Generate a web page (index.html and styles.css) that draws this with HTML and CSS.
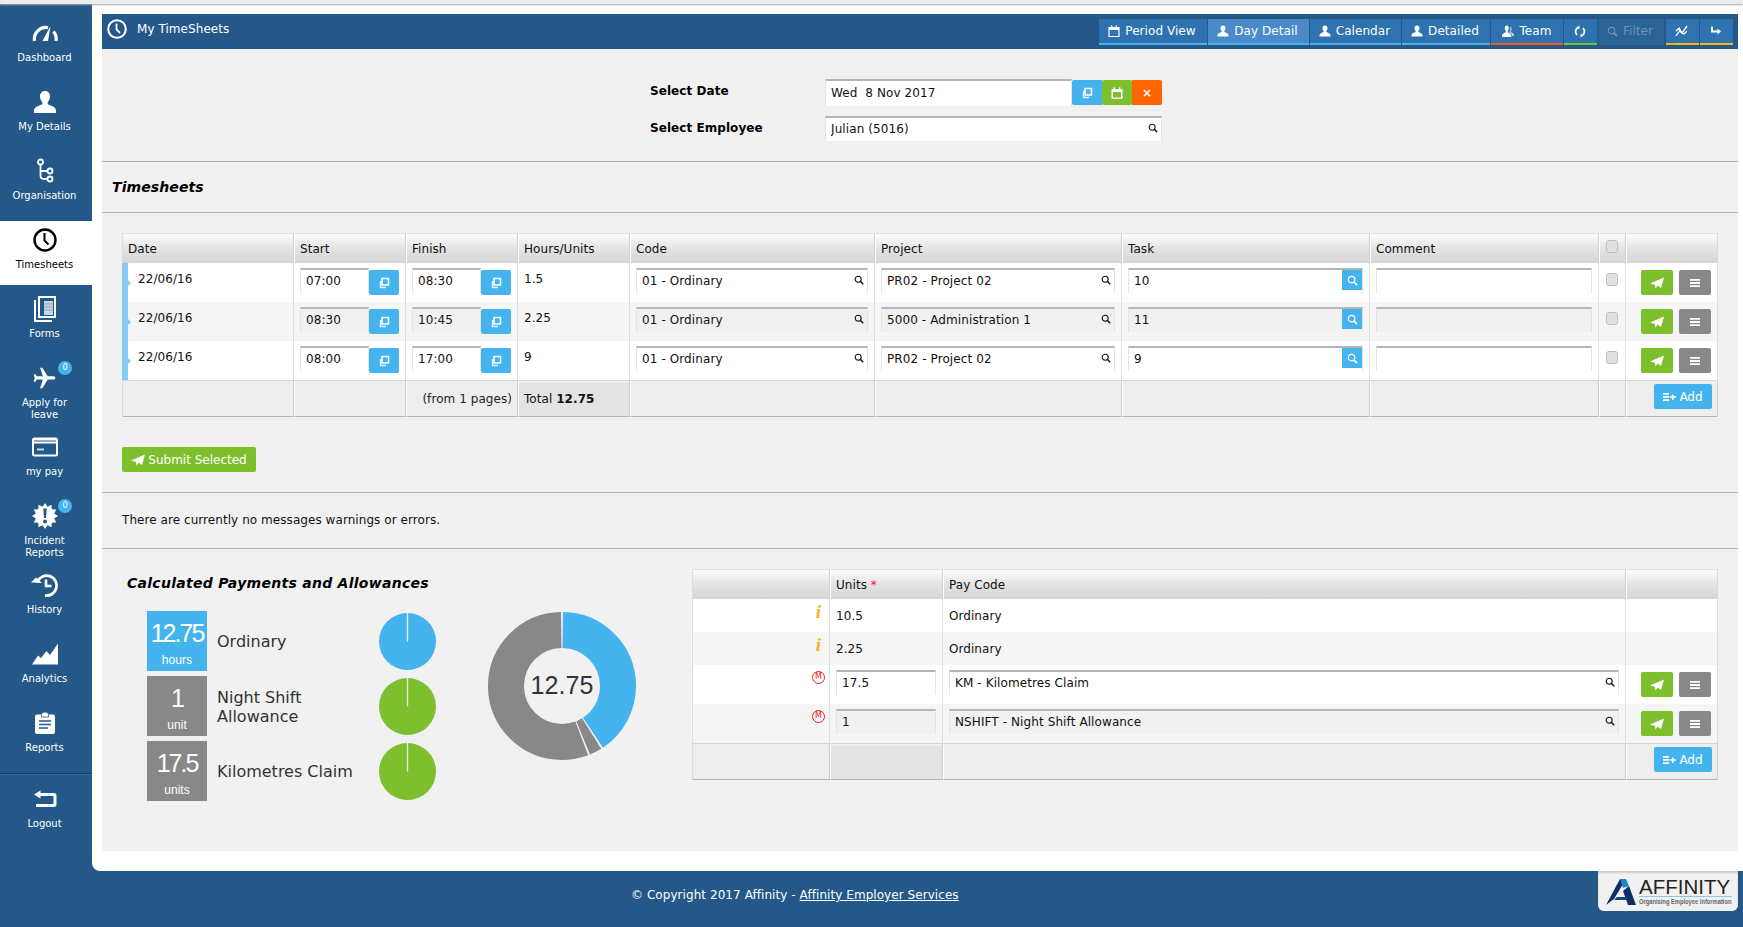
FILE: index.html
```html
<!DOCTYPE html>
<html lang="en">
<head>
<meta charset="utf-8">
<title>My TimeSheets</title>
<link rel="stylesheet" href="styles.css">
</head>
<body>
<svg class="defs" width="0" height="0">
  <symbol id="i-copy" viewBox="0 0 12 12"><path d="M4 1.500h6.500v6.500H4z" fill="none" stroke="currentColor" stroke-width="1.600"/><path d="M2.500 4v6.500H8" fill="none" stroke="currentColor" stroke-width="1.400" opacity=".85"/></symbol>
  <symbol id="i-cal" viewBox="0 0 12 12"><path d="M1 2.500h10v9H1z" fill="none" stroke="currentColor" stroke-width="1.200"/><path d="M1 2h10v3H1zM3 .5h1.400V3H3zM7.600 .5H9V3H7.600z" fill="currentColor"/></symbol>
  <symbol id="i-calf" viewBox="0 0 12 12"><path d="M.5 2h11v9.800H.5zM2 5v5.400h8V5z" fill="currentColor" fill-rule="evenodd"/><path d="M2.600 .3h1.400v3H2.600zM8 .3h1.400v3H8z" fill="currentColor"/></symbol>
  <symbol id="i-user" viewBox="0 0 24 24"><path d="M12 1C8.500 1 7 3.500 7 6.500c0 2.200 1 4.300 2.300 5.500v2.200C6.300 15.500 1 17 1 20.500v2.500h22v-2.500c0-3.500-5.300-5-8.300-6.300V12c1.300-1.200 2.300-3.300 2.300-5.500C17 3.500 15.500 1 12 1z" fill="currentColor"/></symbol>
  <symbol id="i-team" viewBox="0 0 24 24"><path d="M10 1C7 1 6 3.500 6 6c0 2 .8 3.600 2 4.800v2.400C5.500 14.500 1 16 1 19v3h17v-3c0-3-4-4.500-6.500-5.800v-2.400c1.200-1.200 2-2.800 2-4.800 0-2.500-1-5-4.500-5z" fill="currentColor"/><path d="M16 3c2 .5 2.800 2.200 2.800 4 0 1.700-.7 3-1.700 4v2c2 1 5.900 2.300 5.900 5v2.500h-3c0-3-2.500-5-5-6.500v-2c1-1.500 1.500-3 1.500-4.500 0-1.600-.2-3-.5-4.500z" fill="currentColor" opacity=".75"/></symbol>
  <symbol id="i-refresh" viewBox="0 0 12 12"><path d="M4.500 1.800A4.500 4.500 0 0 0 3 9.300M7.500 10.200A4.500 4.500 0 0 0 9 2.700" fill="none" stroke="currentColor" stroke-width="1.800"/><path d="M5.500 0v4L3 1.800zM6.500 12V8L9 10.200z" fill="currentColor"/></symbol>
  <symbol id="i-search" viewBox="0 0 12 12"><circle cx="5" cy="5" r="3.600" fill="none" stroke="currentColor" stroke-width="1.300"/><path d="M7.800 7.800l3.200 3.200" stroke="currentColor" stroke-width="1.800"/></symbol>
  <symbol id="i-chart" viewBox="0 0 14 12"><path d="M1 11l3.500-5 2.500 2 5-7M1 6l3-3 3 5 2 1 3-3" fill="none" stroke="currentColor" stroke-width="1.300"/></symbol>
  <symbol id="i-turn" viewBox="0 0 12 12"><path d="M2 1.500v5h6" fill="none" stroke="currentColor" stroke-width="1.800"/><path d="M7.500 3.500l3.500 3-3.500 3z" fill="currentColor"/></symbol>
  <symbol id="i-send" viewBox="0 0 14 12"><path d="M0 6.500L14 .5 11 11 7.600 8.500 5.500 11.500 5 8z" fill="currentColor"/></symbol>
  <symbol id="i-menu" viewBox="0 0 10 8"><path d="M0 0h10v1.800H0zM0 3.100h10v1.800H0zM0 6.200h10V8H0z" fill="currentColor"/></symbol>
  <symbol id="i-add" viewBox="0 0 13 8"><path d="M0 0h6v1.700H0zM0 3.100h6v1.700H0zM0 6.200h6V8H0zM9 1.500h1.600V3.300H13v1.500h-2.400V7H9V4.800H6.800V3.300H9z" fill="currentColor"/></symbol>
</svg>

<div class="topstrip"></div>

<div class="shell">
  <nav class="sidebar">
    <a class="nav-item"><svg class="nav-icon" width="28" height="20" viewBox="0 0 28 20"><path d="M3.500 18A11.500 11.500 0 0 1 17 4.700" fill="none" stroke="currentColor" stroke-width="3.200"/><path d="M22.500 8.500A11.500 11.500 0 0 1 25 18" fill="none" stroke="currentColor" stroke-width="3.200"/><path d="M11.500 18L19.500 3 17 18z" fill="currentColor"/></svg><span>Dashboard</span></a>
    <a class="nav-item"><svg class="nav-icon" width="24" height="24"><use href="#i-user"/></svg><span>My Details</span></a>
    <a class="nav-item"><svg class="nav-icon" width="18" height="25" viewBox="0 0 18 25"><circle cx="4.500" cy="3.500" r="2.500" fill="none" stroke="currentColor" stroke-width="1.800"/><circle cx="14" cy="12.500" r="2.500" fill="none" stroke="currentColor" stroke-width="1.800"/><circle cx="14" cy="20.500" r="2.500" fill="none" stroke="currentColor" stroke-width="1.800"/><path d="M4.500 6v11c0 2.300 1.300 3.500 3.500 3.500h3.500M4.500 12.500h7" fill="none" stroke="currentColor" stroke-width="1.800"/></svg><span>Organisation</span></a>
    <a class="nav-item is-active"><svg class="nav-icon" width="24" height="24" viewBox="0 0 24 24"><circle cx="12" cy="12" r="10.500" fill="none" stroke="currentColor" stroke-width="2.400"/><path d="M11.500 5v7.500l4 4" fill="none" stroke="currentColor" stroke-width="2"/></svg><span>Timesheets</span></a>
    <a class="nav-item"><svg class="nav-icon" width="22" height="26" viewBox="0 0 22 26"><path d="M4 0h18v22H4z" fill="currentColor"/><path d="M6 2h14v18H6z" fill="#235888"/><path d="M10 5h9v14H10z" fill="#c8d5e2"/><path d="M0 4h2v20h16v2H0z" fill="currentColor"/><path d="M10 8h9M10 11h9M10 14h9" stroke="#8fa6bd" stroke-width="1"/></svg><span>Forms</span></a>
    <a class="nav-item"><svg class="nav-icon" width="26" height="26" viewBox="0 0 24 24"><path transform="rotate(90 11.500 12)" d="M21 16v-2l-8-5V3.500c0-.83-.67-1.500-1.500-1.500S10 2.670 10 3.500V9l-8 5v2l8-2.500V19l-2 1.500V22l3.500-1 3.500 1v-1.500L13 19v-5.500l8 2.500z" fill="currentColor"/></svg><span class="narrow">Apply for leave</span><b class="badge">0</b></a>
    <a class="nav-item"><svg class="nav-icon" width="26" height="19" viewBox="0 0 26 19"><rect width="26" height="19" rx="2.500" fill="currentColor"/><path d="M2 6h22v11H2z" fill="#235888"/><path d="M2 3h22v1H2z" fill="#235888"/><path d="M5 11h7v2H5z" fill="#c8d5e2"/></svg><span>my pay</span></a>
    <a class="nav-item"><svg class="nav-icon" width="26" height="26" viewBox="0 0 26 26"><polygon fill="currentColor" points="26,13 22.180,15.460 24.260,19.500 19.720,19.720 19.500,24.260 15.460,22.180 13,26 10.540,22.180 6.500,24.260 6.280,19.720 1.740,19.500 3.820,15.460 0,13 3.820,10.540 1.740,6.500 6.280,6.280 6.500,1.740 10.540,3.820 13,0 15.460,3.820 19.500,1.740 19.720,6.280 24.260,6.500 22.180,10.540"/><path d="M11.300 5.500h3.400L14 15h-2z" fill="#235888"/><circle cx="13" cy="18.500" r="2" fill="#235888"/></svg><span class="narrow">Incident Reports</span><b class="badge">0</b></a>
    <a class="nav-item"><svg class="nav-icon" width="27" height="24" viewBox="0 0 27 24"><path d="M6.500 8.500A10 10 0 1 1 14 22.500" fill="none" stroke="currentColor" stroke-width="2.800"/><path d="M0 9.500l5-5 6 5.500z" fill="currentColor"/><path d="M15 6.500v6.500h5.500" fill="none" stroke="currentColor" stroke-width="2.600"/></svg><span>History</span></a>
    <a class="nav-item"><svg class="nav-icon" width="26" height="21" viewBox="0 0 26 21"><path d="M0 21l6-9 3 2.500 5.500-7 3.500 4L26 0v21z" fill="currentColor"/></svg><span>Analytics</span></a>
    <a class="nav-item"><svg class="nav-icon" width="20" height="22" viewBox="0 0 20 22"><rect y="2.500" width="20" height="19.500" rx="2" fill="currentColor"/><path d="M6.500 2.500a3.500 2.500 0 0 1 7 0V5h-7z" fill="currentColor" stroke="#235888" stroke-width=".8"/><path d="M4 9h12M4 12.500h12M4 16h9" stroke="#235888" stroke-width="1.500"/></svg><span>Reports</span></a>
    <div class="nav-rule"></div>
    <a class="nav-item"><svg class="nav-icon" width="22" height="17" viewBox="0 0 22 17"><path d="M6 4h13.500a1.500 1.500 0 0 1 1.500 1.500v8a1.500 1.500 0 0 1-1.500 1.500H2" fill="none" stroke="currentColor" stroke-width="3"/><path d="M0 4l6.500-4v8z" fill="currentColor"/></svg><span>Logout</span></a>
  </nav>

  <main class="main">
    <div class="panel">
      <header class="titlebar">
        <svg class="title-clock" width="20" height="20" viewBox="0 0 20 20"><circle cx="10" cy="10" r="8.800" fill="none" stroke="currentColor" stroke-width="2"/><path d="M9.500 4.500v6l3.500 3.500" fill="none" stroke="currentColor" stroke-width="1.800"/></svg>
        <h1 class="title-text">My TimeSheets</h1>
        <div class="tabs">
          <a class="tab"><svg width="12" height="12"><use href="#i-cal"/></svg>Period View</a>
          <a class="tab is-current"><svg width="12" height="12"><use href="#i-user"/></svg>Day Detail</a>
          <a class="tab"><svg width="12" height="12"><use href="#i-user"/></svg>Calendar</a>
          <a class="tab"><svg width="12" height="12"><use href="#i-user"/></svg>Detailed</a>
          <a class="tab tab-orange"><svg width="14" height="13"><use href="#i-team"/></svg>Team</a>
          <a class="tab tab-green"><svg width="12" height="13"><use href="#i-refresh"/></svg></a>
          <a class="tab tab-off"><svg width="11" height="11"><use href="#i-search"/></svg>Filter</a>
          <a class="tab tab-yellow"><svg width="14" height="12"><use href="#i-chart"/></svg></a>
          <a class="tab tab-yellow"><svg width="12" height="12"><use href="#i-turn"/></svg></a>
        </div>
      </header>

      <section class="selectors">
        <div class="sel-row">
          <label class="sel-label">Select Date</label>
          <input class="field sel-date" value="Wed  8 Nov 2017">
          <div class="date-btns">
            <button class="ibtn c-blue"><svg width="12" height="12"><use href="#i-copy"/></svg></button>
            <button class="ibtn c-green"><svg width="12" height="12"><use href="#i-calf"/></svg></button>
            <button class="ibtn c-orange"><span class="x">×</span></button>
          </div>
        </div>
        <div class="sel-row sel-row-2">
          <label class="sel-label">Select Employee</label>
          <div class="lookup sel-emp"><input class="field" value="Julian (5016)"><svg class="lookup-icon" width="10" height="10"><use href="#i-search"/></svg></div>
        </div>
      </section>

      <h2 class="sec-title">Timesheets</h2>

      <section class="sec-table">
        <table class="grid grid-time">
          <colgroup><col class="w172"><col class="w112"><col class="w112"><col class="w112"><col class="w245"><col class="w247"><col class="w248"><col class="w229"><col class="w27"><col class="w92"></colgroup>
          <thead><tr><th>Date</th><th>Start</th><th>Finish</th><th>Hours/Units</th><th>Code</th><th>Project</th><th>Task</th><th>Comment</th><th class="th-check"><i class="check"></i></th><th></th></tr></thead>
          <tbody>
            <tr>
              <td class="date-cell">22/06/16</td>
              <td><div class="timebox"><input class="field" value="07:00"><button class="ibtn c-blue"><svg width="12" height="12"><use href="#i-copy"/></svg></button></div></td>
              <td><div class="timebox"><input class="field" value="08:30"><button class="ibtn c-blue"><svg width="12" height="12"><use href="#i-copy"/></svg></button></div></td>
              <td class="txt">1.5</td>
              <td><div class="lookup"><input class="field" value="01 - Ordinary"><svg class="lookup-icon" width="10" height="10"><use href="#i-search"/></svg></div></td>
              <td><div class="lookup"><input class="field" value="PR02 - Project 02"><svg class="lookup-icon" width="10" height="10"><use href="#i-search"/></svg></div></td>
              <td><div class="lookup"><input class="field" value="10"><button class="lookup-btn"><svg width="11" height="11"><use href="#i-search"/></svg></button></div></td>
              <td><div class="lookup lookup-c"><input class="field"></div></td>
              <td class="td-check"><i class="check"></i></td>
              <td><div class="acts"><button class="abtn c-green"><svg width="14" height="12"><use href="#i-send"/></svg></button><button class="abtn c-grey"><svg width="10" height="8"><use href="#i-menu"/></svg></button></div></td>
            </tr>
            <tr class="alt">
              <td class="date-cell">22/06/16</td>
              <td><div class="timebox"><input class="field" value="08:30"><button class="ibtn c-blue"><svg width="12" height="12"><use href="#i-copy"/></svg></button></div></td>
              <td><div class="timebox"><input class="field" value="10:45"><button class="ibtn c-blue"><svg width="12" height="12"><use href="#i-copy"/></svg></button></div></td>
              <td class="txt">2.25</td>
              <td><div class="lookup"><input class="field" value="01 - Ordinary"><svg class="lookup-icon" width="10" height="10"><use href="#i-search"/></svg></div></td>
              <td><div class="lookup"><input class="field" value="5000 - Administration 1"><svg class="lookup-icon" width="10" height="10"><use href="#i-search"/></svg></div></td>
              <td><div class="lookup"><input class="field" value="11"><button class="lookup-btn"><svg width="11" height="11"><use href="#i-search"/></svg></button></div></td>
              <td><div class="lookup lookup-c"><input class="field"></div></td>
              <td class="td-check"><i class="check"></i></td>
              <td><div class="acts"><button class="abtn c-green"><svg width="14" height="12"><use href="#i-send"/></svg></button><button class="abtn c-grey"><svg width="10" height="8"><use href="#i-menu"/></svg></button></div></td>
            </tr>
            <tr>
              <td class="date-cell">22/06/16</td>
              <td><div class="timebox"><input class="field" value="08:00"><button class="ibtn c-blue"><svg width="12" height="12"><use href="#i-copy"/></svg></button></div></td>
              <td><div class="timebox"><input class="field" value="17:00"><button class="ibtn c-blue"><svg width="12" height="12"><use href="#i-copy"/></svg></button></div></td>
              <td class="txt">9</td>
              <td><div class="lookup"><input class="field" value="01 - Ordinary"><svg class="lookup-icon" width="10" height="10"><use href="#i-search"/></svg></div></td>
              <td><div class="lookup"><input class="field" value="PR02 - Project 02"><svg class="lookup-icon" width="10" height="10"><use href="#i-search"/></svg></div></td>
              <td><div class="lookup"><input class="field" value="9"><button class="lookup-btn"><svg width="11" height="11"><use href="#i-search"/></svg></button></div></td>
              <td><div class="lookup lookup-c"><input class="field"></div></td>
              <td class="td-check"><i class="check"></i></td>
              <td><div class="acts"><button class="abtn c-green"><svg width="14" height="12"><use href="#i-send"/></svg></button><button class="abtn c-grey"><svg width="10" height="8"><use href="#i-menu"/></svg></button></div></td>
            </tr>
          </tbody>
          <tfoot><tr><td></td><td></td><td class="from">(from 1 pages)</td><td class="total">Total <b>12.75</b></td><td></td><td></td><td></td><td></td><td></td><td class="add-cell"><button class="add-btn"><svg width="13" height="8"><use href="#i-add"/></svg>Add</button></td></tr></tfoot>
        </table>
        <button class="submit"><svg width="14" height="12"><use href="#i-send"/></svg>Submit Selected</button>
      </section>

      <p class="msgs">There are currently no messages warnings or errors.</p>

      <section class="calc">
        <div class="calc-left">
          <h2 class="calc-title">Calculated Payments and Allowances</h2>
          <div class="calc-body">
            <div class="tiles">
              <div class="tile-row">
                <div class="tile c-blue"><strong>12.75</strong><small>hours</small></div>
                <div class="tile-label">Ordinary</div>
                <svg class="pie" width="57" height="57" viewBox="0 0 57 57"><circle cx="28.500" cy="28.500" r="28.500" fill="#44b3ee"/><path d="M28.500 0v28.500" stroke="#f1f1f1" stroke-width="1.300"/></svg>
              </div>
              <div class="tile-row">
                <div class="tile c-grey"><strong>1</strong><small>unit</small></div>
                <div class="tile-label">Night Shift Allowance</div>
                <svg class="pie" width="57" height="57" viewBox="0 0 57 57"><circle cx="28.500" cy="28.500" r="28.500" fill="#7dbf2c"/><path d="M28.500 0v28.500" stroke="#f1f1f1" stroke-width="1.300"/></svg>
              </div>
              <div class="tile-row">
                <div class="tile c-grey"><strong>17.5</strong><small>units</small></div>
                <div class="tile-label">Kilometres Claim</div>
                <svg class="pie" width="57" height="57" viewBox="0 0 57 57"><circle cx="28.500" cy="28.500" r="28.500" fill="#7dbf2c"/><path d="M28.500 0v28.500" stroke="#f1f1f1" stroke-width="1.300"/></svg>
              </div>
            </div>
            <svg class="donut" width="148" height="148" viewBox="0 0 148 148">
              <g fill="none" stroke-width="36" transform="rotate(-90 74 74)">
                <circle cx="74" cy="74" r="56" pathLength="360" stroke="#888" stroke-dasharray="199.900 360" stroke-dashoffset="-159.300"/>
                <circle cx="74" cy="74" r="56" pathLength="360" stroke="#888" stroke-dasharray="9.800 360" stroke-dashoffset="-148"/>
                <circle cx="74" cy="74" r="56" pathLength="360" stroke="#44b3ee" stroke-dasharray="145.600 360" stroke-dashoffset="-.8"/>
              </g>
              <text class="donut-text" x="74" y="82" text-anchor="middle">12.75</text>
            </svg>
          </div>
        </div>

        <table class="grid grid-pay">
          <colgroup><col class="w138"><col class="w113"><col class="w683"><col class="w92"></colgroup>
          <thead><tr><th></th><th>Units <span class="req">*</span></th><th>Pay Code</th><th></th></tr></thead>
          <tbody>
            <tr class="short"><td class="flag"><em class="info">i</em></td><td class="txt-2">10.5</td><td class="txt-2">Ordinary</td><td></td></tr>
            <tr class="short alt"><td class="flag"><em class="info">i</em></td><td class="txt-2">2.25</td><td class="txt-2">Ordinary</td><td></td></tr>
            <tr>
              <td class="flag"><span class="mflag">M</span></td>
              <td><input class="field units" value="17.5"></td>
              <td><div class="lookup"><input class="field" value="KM - Kilometres Claim"><svg class="lookup-icon" width="10" height="10"><use href="#i-search"/></svg></div></td>
              <td><div class="acts"><button class="abtn c-green"><svg width="14" height="12"><use href="#i-send"/></svg></button><button class="abtn c-grey"><svg width="10" height="8"><use href="#i-menu"/></svg></button></div></td>
            </tr>
            <tr class="alt">
              <td class="flag"><span class="mflag">M</span></td>
              <td><input class="field units" value="1"></td>
              <td><div class="lookup"><input class="field" value="NSHIFT - Night Shift Allowance"><svg class="lookup-icon" width="10" height="10"><use href="#i-search"/></svg></div></td>
              <td><div class="acts"><button class="abtn c-green"><svg width="14" height="12"><use href="#i-send"/></svg></button><button class="abtn c-grey"><svg width="10" height="8"><use href="#i-menu"/></svg></button></div></td>
            </tr>
          </tbody>
          <tfoot><tr><td></td><td class="total"></td><td></td><td class="add-cell"><button class="add-btn"><svg width="13" height="8"><use href="#i-add"/></svg>Add</button></td></tr></tfoot>
        </table>
      </section>
    </div>
  </main>
</div>

<footer class="footer">
  <span>© Copyright 2017 Affinity - <a class="foot-link">Affinity Employer Services</a></span>
  <div class="logo">
    <svg class="logo-mark" width="30" height="27" viewBox="0 0 30 27"><path d="M0 27L14 1h6L8 21z" fill="#0f2f63"/><path d="M14 1h6l3 7-6 2z" fill="#1f86c4"/><path d="M17 13l6-5 7 19h-8z" fill="#0f2f63"/><path d="M11 19h9l1 3H8z" fill="#11477f"/></svg>
    <div class="logo-words"><div class="logo-name">AFFINITY</div><div class="logo-rule"></div><div class="logo-tag">Organising Employee Information</div></div>
  </div>
</footer>
</body>
</html>
```

FILE: styles.css
```css
* { box-sizing: border-box; }
html, body { margin: 0; padding: 0; }
body {
  width: 1743px;
  height: 927px;
  overflow: hidden;
  background: #235888;
  color: #111;
  font: 12px/15px "DejaVu Sans", Verdana, sans-serif;
  letter-spacing: .06px;
}
.defs { position: absolute; }
h1, h2, p { margin: 0; }

.topstrip {
  height: 4px;
  background: #ececec;
  box-shadow: 0 1px 2px #a8a8a8;
  position: relative;
}
.shell { display: flex; height: 867px; }

/* sidebar */
.sidebar { width: 92px; flex: none; padding-top: 10px; color: #fff; background: #235888; }
.nav-item {
  position: relative;
  display: flex;
  flex-direction: column;
  align-items: center;
  height: 64px;
  margin-bottom: 5px;
  padding-right: 3px;
  font-size: 10px;
  line-height: 12px;
  text-align: center;
  color: #fff;
  letter-spacing: 0;
}
.nav-item > svg { height: 26px; margin: 6px 0 6px; flex: none; overflow: visible; }
.nav-item.is-active { background: #fff; color: #000; }
.nav-item span { width: 80px; }
.nav-item span.narrow { width: 62px; }
.badge {
  position: absolute;
  top: 2px;
  left: 58px;
  width: 14px;
  height: 14px;
  border-radius: 50%;
  background: #44b3ee;
  color: #fff;
  font-size: 8px;
  font-weight: normal;
  line-height: 14px;
}
.nav-rule { height: 1px; background: #17406a; box-shadow: 0 1px 0 #2f6a9e; margin-bottom: 6px; }

/* main */
.main {
  flex: 1;
  height: 867px;
  background: #fff;
  padding: 10px 5px 20px 10px;
  border-bottom-left-radius: 8px;
}
.panel { height: 837px; background: #f1f1f1; }

.titlebar { display: flex; align-items: center; height: 35px; background: #235888; color: #fff; padding-left: 5px; }
.title-clock { flex: none; align-self: flex-start; margin-top: 5px; }
.title-text { margin-left: 10px; font-size: 12px; font-weight: normal; position: relative; top: -2px; }
.tabs {
  margin-left: auto;
  margin-right: 5px;
  align-self: flex-start;
  margin-top: 5px;
  display: grid;
  grid-template-columns: 108px 101px 91px 88px 72px 33px 67px 33px 33px;
  column-gap: 1px;
}
.tab {
  display: flex;
  align-items: center;
  justify-content: center;
  gap: 5px;
  height: 26px;
  padding-right: 2px;
  background: #2e72b0;
  border-bottom: 2px solid #44b3ee;
  color: #fff;
  font-size: 12px;
}
.tab.is-current { background: #4a8ac9; }
.tab-orange { border-bottom-color: #ff5a14; }
.tab-green { border-bottom-color: #7dbf2c; }
.tab-yellow { border-bottom-color: #ffb400; }
.tab-off { background: #2a6396; border-bottom-color: #2a6396; color: #6f93b5; margin-right: 1px; }

/* selectors */
.field {
  width: 100%;
  height: 25px;
  margin: 0;
  padding: 0 5px 2px;
  background: #fff;
  border: 0;
  border-top: 2px solid #b5b5b5;
  border-left: 1px solid #e4e4e4;
  border-right: 1px solid #e4e4e4;
  border-radius: 0;
  color: #111;
  font: 12px "DejaVu Sans", Verdana, sans-serif;
  letter-spacing: .1px;
  outline: 0;
}
.selectors { height: 113px; padding: 30px 0 0 548px; border-bottom: 1px solid #b4b4b4; }
.sel-row { display: flex; align-items: flex-start; }
.sel-row-2 { margin-top: 10px; }
.sel-label { width: 175px; font-weight: bold; line-height: 24px; color: #000; }
.sel-date { width: 247px; height: 27px; white-space: pre; }
.date-btns { display: flex; margin-top: 1px; }
.date-btns .ibtn:first-child { border-radius: 2px 0 0 2px; }
.date-btns .ibtn:last-child { border-radius: 0 2px 2px 0; }
.sel-emp { width: 337px; }

.ibtn, .abtn, .lookup-btn, .add-btn, .submit {
  display: flex;
  align-items: center;
  justify-content: center;
  padding: 0;
  border: 0;
  color: #fff;
  font: 12px "DejaVu Sans", Verdana, sans-serif;
}
.ibtn { width: 30px; height: 25px; flex: none; border-radius: 2px; }
.c-blue { background: #44b3ee; }
.c-green { background: #7dbf2c; }
.c-orange { background: #ff6600; }
.c-grey { background: #888; }
.x { font-weight: bold; font-size: 12px; }

.lookup { position: relative; }
.lookup .field { padding-right: 20px; display: block; }
.lookup-icon { position: absolute; right: 4px; top: 7px; color: #111; }
.lookup-btn { position: absolute; right: 1px; top: 2px; width: 20px; height: 20px; background: #44b3ee; }

.sec-title {
  height: 51px;
  padding-left: 10px;
  border-bottom: 1px solid #b4b4b4;
  font-size: 14px;
  font-style: italic;
  font-weight: bold;
  line-height: 50px;
  letter-spacing: .1px;
  color: #000;
}

/* grids */
.sec-table { height: 280px; padding: 20px 20px 0; border-bottom: 1px solid #b4b4b4; }
.grid { border-collapse: separate; border-spacing: 0; table-layout: fixed; }
.grid-time { width: 1596px; }
.grid-pay { width: 1026px; }
.w172 { width: 172px; } .w112 { width: 112px; } .w245 { width: 245px; } .w247 { width: 247px; }
.w248 { width: 248px; } .w229 { width: 229px; } .w27 { width: 27px; } .w92 { width: 92px; }
.w138 { width: 138px; } .w113 { width: 113px; } .w683 { width: 683px; }

.grid th {
  height: 30px;
  padding: 2px 5px 0 5px;
  background: linear-gradient(#fbfbfb, #e4e4e4 50%, #d5d5d5);
  border-top: 1px solid #e2e2e2;
  border-right: 1px solid #d0d0d0;
  border-left: 1px solid #fff;
  text-align: left;
  font-weight: normal;
  color: #111;
}
.grid th:first-child { border-left: 1px solid #ddd; }
.grid th:last-child { border-right: 1px solid #d9d9d9; }
.grid th.th-check { padding: 0 0 0 6px; vertical-align: top; }
.th-check .check { margin-top: 6px; }
.grid td { height: 39px; padding: 5px 6px 0; vertical-align: top; background: #fff; border-right: 1px solid #e0e0e0; }
.grid td:first-child { border-left: 1px solid #ddd; }
.grid tr.alt td { background: #f5f5f5; }
.grid tr.alt .field { background: #f1f1f1; }
.grid tr.short td { height: 33px; }
.grid td.date-cell { position: relative; border-left: 6px solid #86cdf1; padding: 9px 6px 0 10px; }
.date-cell::before {
  content: "";
  position: absolute;
  left: 0;
  top: 17px;
  border-left: 3px solid #86cdf1;
  border-top: 3px solid transparent;
  border-bottom: 3px solid transparent;
}
.grid .txt { padding-top: 9px; }
.grid .txt-2 { padding-top: 10px; }
.timebox { display: flex; align-items: flex-start; }
.timebox .field { flex: 1; min-width: 0; }
.timebox .ibtn { margin-top: 2px; }
.check {
  display: block;
  width: 12px;
  height: 13px;
  background: #e0e0e0;
  border: 1px solid #bcbcbc;
  border-radius: 3px;
  box-shadow: inset 0 0 1px #fff;
}
.grid .td-check { padding: 10px 0 0 7px; }
.acts { display: flex; gap: 6px; margin: 2px 0 0 9px; }
.abtn { width: 32px; height: 25px; border-radius: 2px; }
.grid tfoot td {
  height: 37px;
  background: #eee;
  border-top: 1px solid #d6d6d6;
  border-bottom: 1px solid #b5b5b5;
  border-right: 1px solid #ccc;
  border-left: 1px solid #fff;
  padding: 2px 5px 0;
  vertical-align: middle;
}
.grid tfoot td:first-child { border-left: 1px solid #ddd; }
.grid tfoot td:last-child { border-right: 1px solid #d2d2d2; }
.from { text-align: right; white-space: nowrap; color: #222; }
.grid tfoot .total { background: #e3e3e3; box-shadow: inset 0 2px 0 #eee; }
.grid tfoot .add-cell { padding: 3px 0 0; vertical-align: top; }
.add-btn { width: 58px; height: 25px; gap: 3px; margin-left: 27px; background: #44b3ee; border-radius: 2px; }
.submit { gap: 3px; width: 134px; height: 25px; margin-top: 30px; background: #7dbf2c; border-radius: 2px; }

.msgs { height: 56px; padding-left: 20px; line-height: 55px; border-bottom: 1px solid #b4b4b4; color: #111; }

/* calc */
.calc { display: flex; align-items: flex-start; padding-top: 20px; }
.calc-left { width: 590px; flex: none; }
.calc-title { margin: 4px 0 18px 25px; font-size: 14px; font-style: italic; font-weight: bold; line-height: 20px; letter-spacing: .28px; color: #000; }
.calc-body { display: flex; align-items: flex-start; }
.tiles { display: flex; flex-direction: column; gap: 5px; padding-left: 45px; }
.tile-row { display: flex; align-items: center; }
.tile {
  display: flex;
  flex-direction: column;
  align-items: center;
  width: 60px;
  height: 60px;
  padding-top: 8px;
  color: #fff;
  font-family: "Liberation Sans", Arial, sans-serif;
}
.tile strong { font-size: 25px; font-weight: normal; letter-spacing: -2px; line-height: 28px; }
.tile small { margin-top: 6px; font-size: 12px; line-height: 14px; }
.tile-label { width: 162px; margin-left: 10px; padding-top: 1px; font-size: 16px; line-height: 19px; letter-spacing: 0; color: #333; }
.pie { flex: none; }
.donut { flex: none; margin: 1px 0 0 52px; }
.donut-text { font: 25px "Liberation Sans", Arial, sans-serif; fill: #333; }
.req { color: #f01c1c; }
.grid .flag { text-align: right; padding: 3px 4px 0 0; }
.grid .flag .info { margin-right: 4px; }
.info { font: italic bold 19px/20px "Liberation Serif", serif; color: #fbb117; }
.mflag {
  display: inline-block;
  width: 13px;
  height: 13px;
  margin-top: 3px;
  border: 1.500px solid #f01c1c;
  border-radius: 50%;
  color: #f01c1c;
  font-size: 8px;
  line-height: 10px;
  text-align: center;
  letter-spacing: 0;
}

/* footer */
.footer { position: relative; height: 56px; padding: 17px 0 0 631px; color: #fff; }
.foot-link { color: #fff; text-decoration: underline; }
.logo {
  position: absolute;
  top: 0;
  left: 1598px;
  display: flex;
  gap: 3px;
  width: 140px;
  height: 40px;
  padding: 7px 0 0 8px;
  background: #f1f1f1;
  border-radius: 0 0 6px 6px;
  box-shadow: inset 0 2px 2px #ccc;
}
.logo-words { width: 93px; }
.logo-name { font: 20.500px/17px "Liberation Sans", Arial, sans-serif; letter-spacing: 0; color: #222; white-space: nowrap; }
.logo-rule { height: 1px; margin-top: 1px; background: #8cc7e8; }
.logo-tag { font: bold 8px/9px "Liberation Sans", Arial, sans-serif; letter-spacing: 0; color: #666; white-space: nowrap; transform: scaleX(.72); transform-origin: 0 0; }
```
